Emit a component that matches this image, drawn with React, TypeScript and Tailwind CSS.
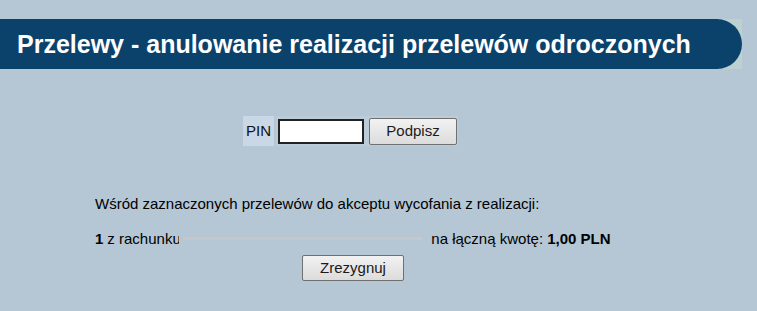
import React from 'react';

const btn = "border border-[#707070] rounded-[2px] bg-gradient-to-b from-[#f2f2f2] to-[#dcdcdc] text-[15px] text-[#1a1a1a]";

const App: React.FC = () => {
    return (
        <div className="w-[757px] h-[311px] bg-[#b5c7d5] pt-[19px] overflow-hidden font-['Liberation_Sans',Arial,sans-serif] text-[15px] text-black">
            <div className="w-[742px] h-[50px] bg-[#bcd2d0]">
                <div className="h-full bg-[#0b426c] rounded-r-[25px] flex items-center pl-[17px]">
                    <h1 className="text-white font-bold text-[25px] leading-none">Przelewy - anulowanie realizacji przelewów odroczonych</h1>
                </div>
            </div>

            <div className="mt-[47px] ml-[243px] flex items-stretch h-[30px] gap-[2px]">
                <div className="bg-[#c9d7e7] w-[31px] flex items-center justify-center text-[15px] text-[#111]">PIN</div>
                <div className="bg-[#bccbd8] flex items-center gap-[5px] pl-[2px] pr-[1px]">
                    <input type="text" className="w-[86px] h-[25px] bg-white border-2 border-[#222] outline-none" />
                    <button className={`${btn} w-[88px] h-[27px]`}>Podpisz</button>
                </div>
            </div>

            <div className="ml-[95px] mt-[49px]">
                <p className="leading-[18px]">Wśród zaznaczonych przelewów do akceptu wycofania z realizacji:</p>
                <div className="mt-[17px] flex items-center leading-[18px]">
                    <span className="font-bold">1</span>
                    <span className="ml-[4px] w-[72px] overflow-hidden whitespace-nowrap">z rachunku</span>
                    <span className="w-[239px] h-[3px] bg-[#c3c8cc] mt-[-2px] ml-[4px]"></span>
                    <span className="ml-[9px]">na łączną kwotę: <b>1,00 PLN</b></span>
                </div>
                <div className="mt-[7px] ml-[207px]">
                    <button className={`${btn} w-[102px] h-[26px]`}>Zrezygnuj</button>
                </div>
            </div>
        </div>
    );
};

export default App;
